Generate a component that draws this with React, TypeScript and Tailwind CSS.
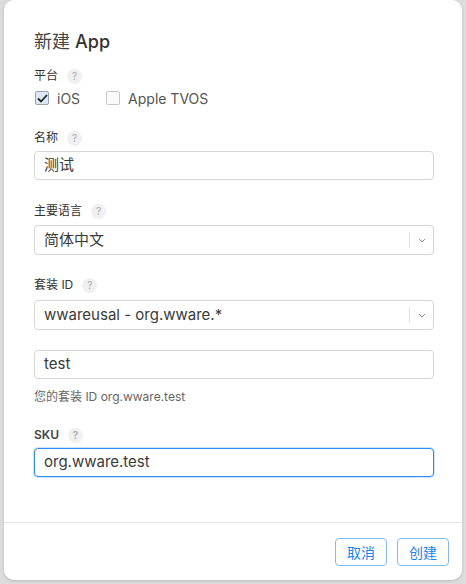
import type { ReactNode } from 'react';

const font = { fontFamily: 'Inter, "Noto Sans CJK SC", sans-serif' };

function Help() {
  return (
    <span className="ml-[9px] inline-flex h-[15px] w-[15px] items-center justify-center rounded-full bg-[#f0f0f0] text-[10px] leading-none text-[#a8a8a8]">
      ?
    </span>
  );
}

function Label({ children, className = '' }: { children: ReactNode; className?: string }) {
  return (
    <div className={`flex h-[16px] items-center text-[12px] text-[#333] ${className}`}>
      {children}
      <Help />
    </div>
  );
}

function Checkbox({ checked, label }: { checked?: boolean; label: string }) {
  return (
    <label className="flex items-center gap-[8px] text-[14px] text-[#555]">
      <span
        className={
          checked
            ? 'flex h-[14px] w-[14px] items-center justify-center rounded-[2px] border border-[#9aa3ad] bg-[#dce8f6]'
            : 'h-[14px] w-[14px] rounded-[2px] border border-[#c8c8c8] bg-[#fafafa]'
        }
      >
        {checked && (
          <svg width="11" height="9" viewBox="0 0 11 9" fill="none">
            <path d="M1 4.5 L4 7.5 L10 1" stroke="#222" strokeWidth="1.8" />
          </svg>
        )}
      </span>
      {label}
    </label>
  );
}

function Field({ value, focus, className = '' }: { value: string; focus?: boolean; className?: string }) {
  return (
    <div
      className={`flex h-[29px] items-center rounded-[4px] border bg-white px-[9px] text-[15px] text-[#3a3a3a] ${
        focus ? 'border-[#2f8ef5] shadow-[0_0_0_1px_rgba(47,142,245,0.25)]' : 'border-[#d6d6d6]'
      } ${className}`}
    >
      {value}
    </div>
  );
}

function Select({ value, className = '' }: { value: string; className?: string }) {
  return (
    <div
      className={`flex h-[30px] items-center rounded-[4px] border border-[#d6d6d6] bg-white pl-[9px] text-[15px] text-[#3a3a3a] ${className}`}
    >
      <span className="flex-1">{value}</span>
      <span className="h-[16px] w-px bg-[#e2e2e2]" />
      <span className="flex w-[23px] justify-center">
        <svg width="8" height="5" viewBox="0 0 8 5" fill="none">
          <path d="M1 1 L4 4 L7 1" stroke="#8a8a8a" strokeWidth="1" />
        </svg>
      </span>
    </div>
  );
}

function Button({ children }: { children: ReactNode }) {
  return (
    <button className="h-[28px] w-[52px] rounded-[4px] border border-[#7fbaf5] bg-white text-[14px] text-[#1a84f0]">
      {children}
    </button>
  );
}

export default function App() {
  return (
    <div
      className="flex h-[584px] w-[466px] bg-[#dcdcdc] pb-[4px] pl-[4px] pr-[4px]"
      style={font}
    >
      <div className="flex flex-1 flex-col rounded-[10px] bg-white shadow-[0_1px_3px_rgba(0,0,0,0.15)]">
        <div className="flex flex-1 flex-col pl-[30px] pr-[28px] pt-[30px]">
          <h1 className="h-[24px] text-[18px] leading-[24px] text-[#444]">
            新建 <span className="font-medium text-[#333]">App</span>
          </h1>

          <Label className="mt-[14px]">平台</Label>
          <div className="mt-[4px] flex h-[20px] items-center gap-[26px] pl-px">
            <Checkbox checked label="iOS" />
            <Checkbox label="Apple TVOS" />
          </div>

          <Label className="mt-[22px]">名称</Label>
          <Field value="测试" className="mt-[5px]" />

          <Label className="mt-[23px]">主要语言</Label>
          <Select value="简体中文" className="mt-[6px]" />

          <Label className="mt-[22px]">套装 ID</Label>
          <Select value="wwareusal - org.wware.*" className="mt-[7px]" />

          <Field value="test" className="mt-[20px]" />
          <div className="mt-[10px] h-[16px] text-[12px] leading-[16px] text-[#666]">
            您的套装 ID org.wware.test
          </div>

          <Label className="mt-[22px] font-semibold text-[#444]">SKU</Label>
          <Field value="org.wware.test" focus className="mt-[5px]" />
        </div>

        <div className="h-px bg-[#e4e4e4]" />
        <div className="flex justify-end gap-[10px] pb-[14px] pr-[13px] pt-[15px]">
          <Button>取消</Button>
          <Button>创建</Button>
        </div>
      </div>
    </div>
  );
}
